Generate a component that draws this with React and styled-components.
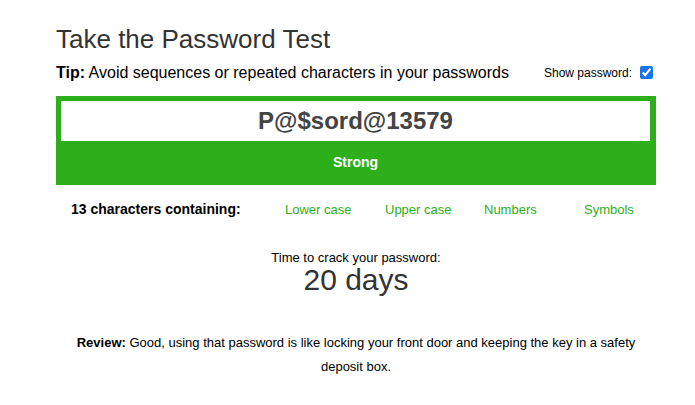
import React, { useState } from "react";
import styled, { createGlobalStyle } from "styled-components";

const GlobalStyle = createGlobalStyle`
  body {
    margin: 0;
    background: #fff;
    font-family: "Liberation Sans", Arial, sans-serif;
    color: #000;
  }
`;

const GREEN = "#2caf1a";

const Page = styled.div`
  width: 600px;
  margin: 0 0 0 56px;
  padding-top: 24px;
`;

const Title = styled.h1`
  margin: 0;
  font-size: 26px;
  font-weight: 400;
  color: #333;
  line-height: 30px;
`;

const TipRow = styled.div`
  display: flex;
  align-items: center;
  justify-content: space-between;
  margin-top: 7px;
  height: 24px;
`;

const Tip = styled.p`
  margin: 0;
  font-size: 16px;
  b {
    font-weight: 700;
  }
`;

const ShowLabel = styled.label`
  display: flex;
  align-items: center;
  font-size: 12px;
  gap: 8px;
  input {
    margin: 0 3px 2px 0;
    width: 13px;
    height: 13px;
    accent-color: #1a73e8;
  }
`;

const Meter = styled.div`
  margin-top: 11px;
  background: ${GREEN};
  padding: 5px 6px 0 5px;
  height: 89px;
  box-sizing: border-box;
`;

const PasswordInput = styled.input`
  display: block;
  width: 100%;
  height: 40px;
  box-sizing: border-box;
  border: none;
  outline: none;
  background: #fff;
  text-align: center;
  font-family: "Liberation Sans", Arial, sans-serif;
  font-size: 24px;
  font-weight: 700;
  color: #444;
  padding: 0;
`;

const Strength = styled.div`
  text-align: center;
  color: #fff;
  font-weight: 700;
  font-size: 14px;
  line-height: 42px;
`;

const Criteria = styled.div`
  display: grid;
  grid-template-columns: 214px 100px 99px 100px 1fr;
  align-items: center;
  margin-top: 16px;
  height: 16px;
  padding-left: 15px;
`;

const Count = styled.span`
  font-size: 14px;
  font-weight: 700;
`;

const Criterion = styled.span`
  font-size: 13px;
  color: ${(p) => (p.$met ? GREEN : "#999")};
`;

const Crack = styled.div`
  text-align: center;
  margin-top: 34px;
`;

const CrackLabel = styled.div`
  font-size: 13px;
  line-height: 14px;
`;

const CrackTime = styled.div`
  font-size: 30px;
  line-height: 30px;
  color: #333;
`;

const Review = styled.p`
  margin: 36px 0 0;
  padding: 0 14px;
  text-align: center;
  font-size: 13px;
  line-height: 24px;
  b {
    font-weight: 700;
  }
`;

export default function App() {
  const [show, setShow] = useState(true);
  const [pw, setPw] = useState("P@$sord@13579");

  const criteria = ["Lower case", "Upper case", "Numbers", "Symbols"];

  return (
    <>
      <GlobalStyle />
      <Page>
        <Title>Take the Password Test</Title>
        <TipRow>
          <Tip>
            <b>Tip:</b> Avoid sequences or repeated characters in your passwords
          </Tip>
          <ShowLabel>
            Show password:
            <input
              type="checkbox"
              checked={show}
              onChange={(e) => setShow(e.target.checked)}
            />
          </ShowLabel>
        </TipRow>
        <Meter>
          <PasswordInput
            type={show ? "text" : "password"}
            value={pw}
            onChange={(e) => setPw(e.target.value)}
          />
          <Strength>Strong</Strength>
        </Meter>
        <Criteria>
          <Count>{pw.length} characters containing:</Count>
          {criteria.map((c) => (
            <Criterion key={c} $met>
              {c}
            </Criterion>
          ))}
        </Criteria>
        <Crack>
          <CrackLabel>Time to crack your password:</CrackLabel>
          <CrackTime>20 days</CrackTime>
        </Crack>
        <Review>
          <b>Review:</b> Good, using that password is like locking your front
          door and keeping the key in a safety deposit box.
        </Review>
      </Page>
    </>
  );
}
